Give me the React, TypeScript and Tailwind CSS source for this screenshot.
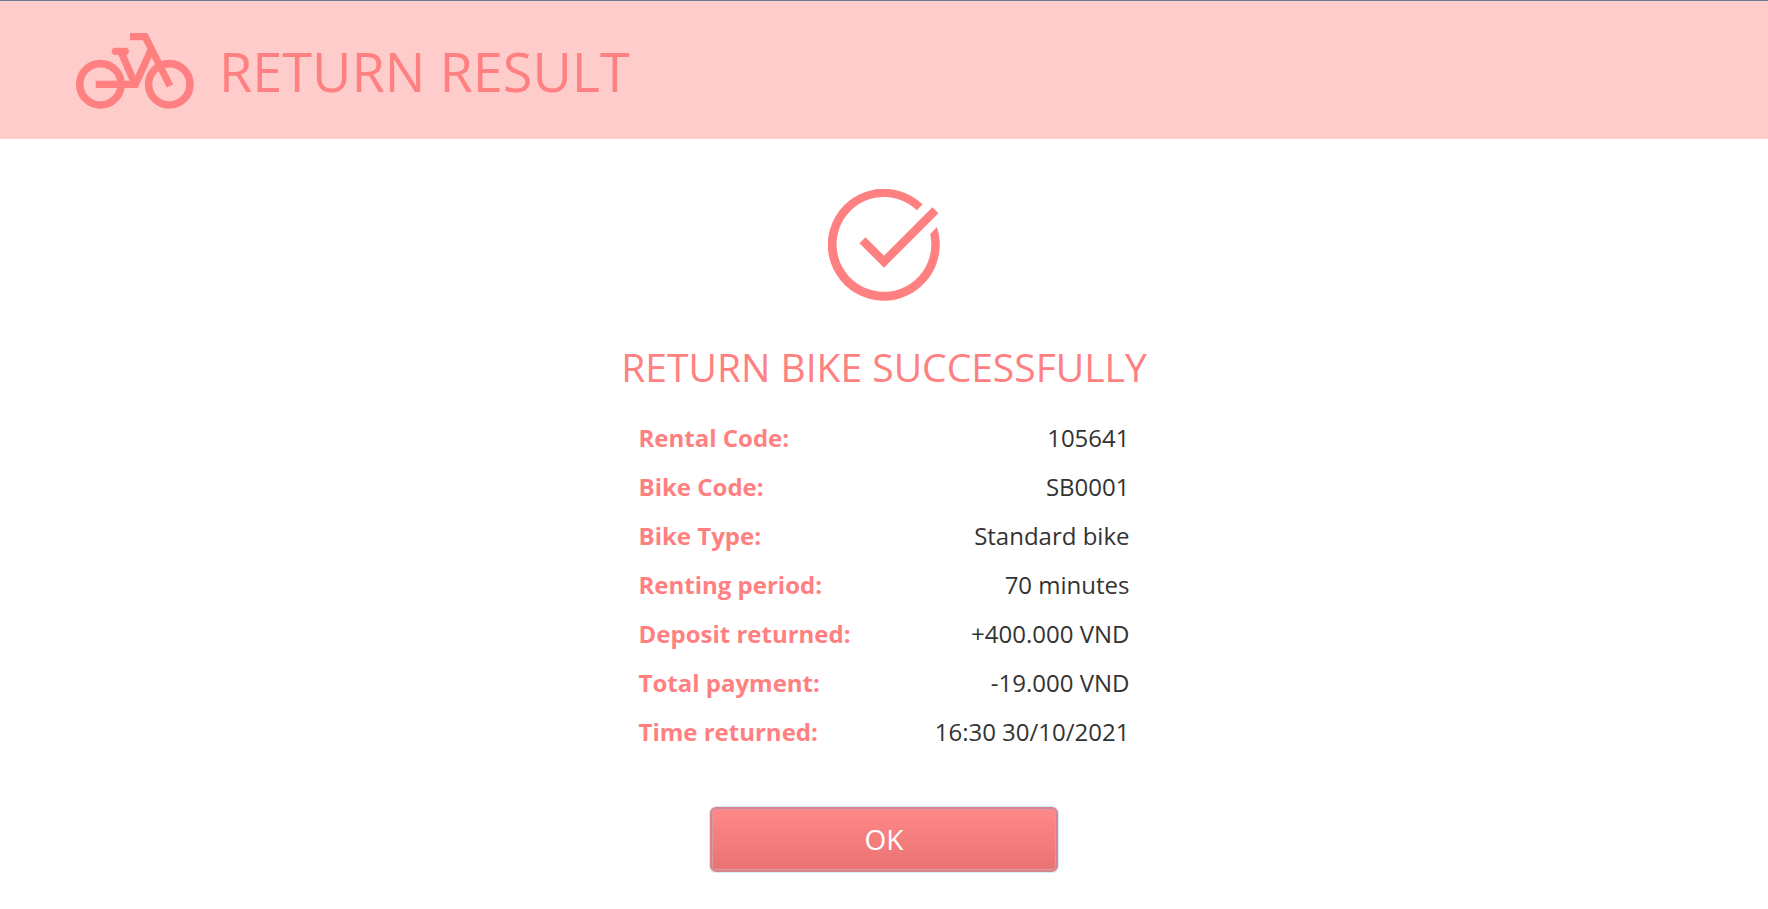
const details = [
  { label: "Rental Code:", value: "105641" },
  { label: "Bike Code:", value: "SB0001" },
  { label: "Bike Type:", value: "Standard bike" },
  { label: "Renting period:", value: "70 minutes" },
  { label: "Deposit returned:", value: "+400.000 VND" },
  { label: "Total payment:", value: "-19.000 VND" },
  { label: "Time returned:", value: "16:30 30/10/2021" },
];

function BikeIcon() {
  return (
    <svg
      className="h-[78px] w-[120px] shrink-0"
      viewBox="0 0 120 78"
      fill="none"
      stroke="#ff8080"
      strokeWidth="7.2"
      aria-hidden="true"
    >
      <circle cx="25.4" cy="52.3" r="20.7" strokeWidth="7.6" />
      <circle cx="94.3" cy="52.3" r="20.7" strokeWidth="7.6" />
      <path d="M20.7 52.3H60.4L76 18" />
      <path d="M55 4.6H70.2L95 54" />
      <path d="M46.5 21L60 52" />
      <path d="M40.3 19.3H50.3" strokeLinecap="round" />
    </svg>
  );
}

function CheckIcon() {
  return (
    <svg className="h-[112px] w-[112px]" viewBox="0 0 112 112" fill="#ff8080" aria-hidden="true">
      <path d="M94.5 15.3A56 56 0 1 0 108.9 38L102.2 45A47.4 47.4 0 1 1 88.9 21.3Z" />
      <path d="M34.5 51.3L56 72.7L107.4 21.3" fill="none" stroke="#ff8080" strokeWidth="8.5" />
    </svg>
  );
}

export default function App() {
  return (
    <div className="min-h-screen bg-white font-['Open_Sans','Noto_Sans',sans-serif] text-[#ff8080]">
      <header className="flex h-[139px] items-center gap-6 border-t border-[#6b7a90] bg-[#ffcccc] px-[75px] pt-[2px]">
        <BikeIcon />
        <h1 className="text-[54px] leading-[72px]">RETURN RESULT</h1>
      </header>
      <main className="flex flex-col items-center pt-[50px] pb-9">
        <CheckIcon />
        <h2 className="mt-[38px] text-[39px] leading-[56px]">RETURN BIKE SUCCESSFULLY</h2>
        <table className="mt-[18px] w-[491px] max-w-full">
          <tbody>
            {details.map(({ label, value }) => (
              <tr key={label} className="h-[49px] text-2xl">
                <th scope="row" className="p-0 text-left font-bold">{label}</th>
                <td className="p-0 text-right text-[#333333]">{value}</td>
              </tr>
            ))}
          </tbody>
        </table>
        <button
          type="button"
          className="mt-[51px] h-[65px] w-[348px] max-w-full rounded-md border-2 border-[#d9838b] bg-linear-to-b from-[#ff8888] to-[#e97373] pb-[2px] text-[28px] text-white shadow-[0_0_0_1px_#d5edf5,inset_0_0_0_1px_#d69aa3]"
        >
          OK
        </button>
      </main>
    </div>
  );
}
